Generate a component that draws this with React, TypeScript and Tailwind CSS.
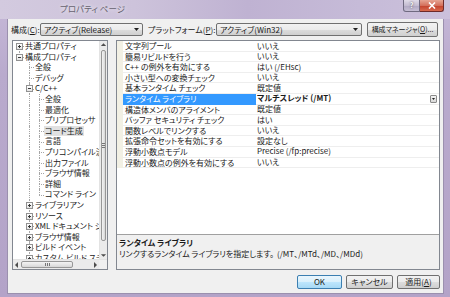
import React from "react";

type TreeItem = {
  t: string;
  l: number;
  e?: "+" | "-";
  up: boolean;
  down: boolean;
  cont?: number[];
  sel?: boolean;
};

const tree: TreeItem[] = [
  { t: "共通プロパティ", l: 0, e: "+", up: false, down: true },
  { t: "構成プロパティ", l: 0, e: "-", up: true, down: false },
  { t: "全般", l: 1, up: true, down: true },
  { t: "デバッグ", l: 1, up: true, down: true },
  { t: "C/C++", l: 1, e: "-", up: true, down: true },
  { t: "全般", l: 2, up: true, down: true, cont: [1] },
  { t: "最適化", l: 2, up: true, down: true, cont: [1] },
  { t: "プリプロセッサ", l: 2, up: true, down: true, cont: [1] },
  { t: "コード生成", l: 2, up: true, down: true, cont: [1], sel: true },
  { t: "言語", l: 2, up: true, down: true, cont: [1] },
  { t: "プリコンパイル済みヘッダー", l: 2, up: true, down: true, cont: [1] },
  { t: "出力ファイル", l: 2, up: true, down: true, cont: [1] },
  { t: "ブラウザ情報", l: 2, up: true, down: true, cont: [1] },
  { t: "詳細", l: 2, up: true, down: true, cont: [1] },
  { t: "コマンド ライン", l: 2, up: true, down: false, cont: [1] },
  { t: "ライブラリアン", l: 1, e: "+", up: true, down: true },
  { t: "リソース", l: 1, e: "+", up: true, down: true },
  { t: "XML ドキュメント ジェネレーター", l: 1, e: "+", up: true, down: true },
  { t: "ブラウザ情報", l: 1, e: "+", up: true, down: true },
  { t: "ビルド イベント", l: 1, e: "+", up: true, down: true },
  { t: "カスタム ビルド ステップ", l: 1, e: "+", up: true, down: true },
];

const props: [string, string][] = [
  ["文字列プール", "いいえ"],
  ["簡易リビルドを行う", "いいえ"],
  ["C++ の例外を有効にする", "はい (/EHsc)"],
  ["小さい型への変換チェック", "いいえ"],
  ["基本ランタイム チェック", "既定値"],
  ["ランタイム ライブラリ", "マルチスレッド (/MT)"],
  ["構造体メンバのアライメント", "既定値"],
  ["バッファ セキュリティ チェック", "はい"],
  ["関数レベルでリンクする", "いいえ"],
  ["拡張命令セットを有効にする", "設定なし"],
  ["浮動小数点モデル", "Precise (/fp:precise)"],
  ["浮動小数点の例外を有効にする", "いいえ"],
];

const col = (lv: number) => 6 + lv * 10;

function TreeRow({ r }: { r: TreeItem }) {
  const c = col(r.l);
  return (
    <div className="relative h-[10.6px] whitespace-nowrap">
      {r.cont?.map((a) => (
        <span key={a} className="absolute top-0 bottom-0 border-l border-dotted border-[#a5a5a5]" style={{ left: col(a) }} />
      ))}
      {r.up && <span className="absolute top-0 h-1/2 border-l border-dotted border-[#a5a5a5]" style={{ left: c }} />}
      {r.down && <span className="absolute top-1/2 bottom-0 border-l border-dotted border-[#a5a5a5]" style={{ left: c }} />}
      <span className="absolute top-1/2 w-[5px] border-t border-dotted border-[#a5a5a5]" style={{ left: c }} />
      {r.e && (
        <span
          className="absolute top-[2px] w-[7px] h-[7px] border border-[#919191] bg-[linear-gradient(#ffffff,#e3e3e3)] flex items-center justify-center"
          style={{ left: c - 3 }}
        >
          <span className="absolute w-[3px] h-px bg-[#3a3a3a]" />
          {r.e === "+" && <span className="absolute w-px h-[3px] bg-[#3a3a3a]" />}
        </span>
      )}
      <span
        className={`absolute top-0 h-full leading-[10.6px] px-px ${r.sel ? "bg-[#e1e1e1]" : ""}`}
        style={{ left: c + 5 }}
      >
        {r.t}
      </span>
    </div>
  );
}

function Arrow({ dir }: { dir: "up" | "down" | "left" | "right" }) {
  const pts = {
    up: "1,5 4,2 7,5",
    down: "1,3 4,6 7,3",
    left: "5,1 2,4 5,7",
    right: "3,1 6,4 3,7",
  }[dir];
  return (
    <svg width="8" height="8" viewBox="0 0 8 8">
      <polygon points={pts} fill="#4d4d4d" />
    </svg>
  );
}

function WinButton({ children, w, def, small }: { children: React.ReactNode; w: string; def?: boolean; small?: boolean }) {
  return (
    <div
      className={`${w} h-full rounded-[2px] border flex items-center justify-center whitespace-nowrap ${
        small ? "text-[7px]" : "text-[8px]"
      } text-[#1a1a1a] ${
        def
          ? "border-[#3c7fb1] bg-[linear-gradient(#eaf6fd,#d9f0fc_50%,#bee6fd_51%,#a7d9f5)]"
          : "border-[#707070] bg-[linear-gradient(#f2f2f2,#ebebeb_50%,#dddddd_51%,#cfcfcf)]"
      }`}
    >
      {children}
    </div>
  );
}

function Combo({ text, w }: { text: string; w: string }) {
  return (
    <div className={`${w} h-[13px] rounded-[2px] border border-[#707070] bg-[linear-gradient(#f2f2f2,#ebebeb_50%,#dddddd_51%,#cfcfcf)] flex items-center pl-[3px] pr-[3px] text-[8px] text-[#1a1a1a]`}>
      <span className="flex-1">{text}</span>
      <svg width="5" height="3" viewBox="0 0 5 3">
        <polygon points="0,0 5,0 2.5,3" fill="#222" />
      </svg>
    </div>
  );
}

export default function App() {
  return (
    <div className="w-[450px] h-[297px] overflow-hidden flex flex-col bg-[linear-gradient(180deg,#c6b9d8,#b9aacd_25%,#b3a3c8)] font-['Noto_Sans_CJK_JP',sans-serif] [font-feature-settings:'palt']">
      {/* Title bar */}
      <div className="relative h-[19px] shrink-0 bg-[linear-gradient(90deg,#d3cadf,#cdc3db_30%,#bfb2d2_55%,#c6bbd8_80%,#cbc0db)]">
        <span className="absolute left-[60px] top-[3px] text-[8.5px] leading-[11px] text-[#66626f] [text-shadow:0_0_4px_#ffffff]">
          プロパティ ページ
        </span>
        <div className="absolute right-[6px] top-0 flex">
          <div className="w-[17px] h-[12px] rounded-bl-[3px] border border-t-0 border-[#6f6a80] bg-[linear-gradient(#e0dbe8,#c3bcd1_50%,#b0a8c2_51%,#c6bfd5)] flex items-center justify-center text-[7px] font-bold text-white [text-shadow:0_0_2px_#333]">
            ?
          </div>
          <div className="w-[24px] h-[12px] rounded-br-[3px] border border-l-0 border-t-0 border-[#6e2a2a] bg-[linear-gradient(#e6a493,#d4705c_50%,#c2402c_51%,#d86a4f)] flex items-center justify-center">
            <svg width="8" height="7" viewBox="0 0 8 7">
              <path d="M1 0.5 L7 6.5 M7 0.5 L1 6.5" stroke="#fff" strokeWidth="1.6" />
            </svg>
          </div>
        </div>
      </div>

      {/* Client */}
      <div className="ml-[8px] mr-[7px] h-[274px] shrink-0 bg-[#f0f0f0] shadow-[0_0_0_1px_#9b90ae] flex flex-col">
        {/* Config row */}
        <div className="mt-[3px] h-[15px] pl-[3px] flex items-center text-[8px] text-[#1a1a1a] whitespace-nowrap">
          <span className="w-[29px]">
            構成(<span className="underline">C</span>):
          </span>
          <Combo text="アクティブ(Release)" w="w-[103px]" />
          <span className="ml-[5px] w-[68px]">
            プラットフォーム(<span className="underline">P</span>):
          </span>
          <Combo text="アクティブ(Win32)" w="w-[146px]" />
          <div className="ml-[5px] h-[15px]">
            <WinButton w="w-[71px]" small>
              構成マネージャ(<span className="underline">O</span>)...
            </WinButton>
          </div>
        </div>

        {/* Main row */}
        <div className="mt-[3px] h-[230px] pl-[4px] flex text-[8px] text-[#1a1a1a]">
          {/* Tree */}
          <div className="w-[96px] h-full border border-[#828790] bg-white flex flex-col overflow-hidden">
            <div className="flex-1 flex min-h-0">
              <div className="flex-1 overflow-hidden">
                {tree.map((r, i) => (
                  <TreeRow key={i} r={r} />
                ))}
              </div>
              <div className="w-[8px] flex flex-col bg-[#ebebeb] border-l border-[#e3e3e3]">
                <div className="h-[8px] flex items-center justify-center">
                  <Arrow dir="up" />
                </div>
                <div className="flex-1 px-px pt-px pb-[10px] flex">
                  <div className="flex-1 rounded-[2px] border border-[#979797] bg-[linear-gradient(90deg,#f3f3f3,#e6e6e6_50%,#d6d6d6)] flex flex-col items-center justify-center gap-px">
                    <span className="w-[3px] h-px bg-[#777]" />
                    <span className="w-[3px] h-px bg-[#777]" />
                    <span className="w-[3px] h-px bg-[#777]" />
                  </div>
                </div>
                <div className="h-[8px] flex items-center justify-center">
                  <Arrow dir="down" />
                </div>
              </div>
            </div>
            <div className="h-[10px] flex border-t border-[#e3e3e3] bg-[#ebebeb]">
              <div className="w-[8px] flex items-center justify-center">
                <Arrow dir="left" />
              </div>
              <div className="flex-1 py-px pr-[14px] flex">
                <div className="w-[52px] rounded-[2px] border border-[#979797] bg-[linear-gradient(#f3f3f3,#e6e6e6_50%,#d6d6d6)] flex items-center justify-center gap-px">
                  <span className="w-px h-[3px] bg-[#777]" />
                  <span className="w-px h-[3px] bg-[#777]" />
                  <span className="w-px h-[3px] bg-[#777]" />
                </div>
              </div>
              <div className="w-[8px] flex items-center justify-center">
                <Arrow dir="right" />
              </div>
              <div className="w-[8px] bg-[#f0f0f0]" />
            </div>
          </div>

          {/* Property grid */}
          <div className="ml-[8px] w-[324px] h-full border border-[#828790] flex flex-col">
            <div className="flex-1 bg-white">
              {props.map(([k, v], i) => {
                const sel = i === 5;
                return (
                  <div key={i} className="h-[10.6px] flex whitespace-nowrap leading-[10.6px]">
                    <div className="w-[6px] bg-[#f2f0e4]" />
                    <div
                      className={`w-[133px] pl-[2px] overflow-hidden border-b ${
                        sel ? "bg-[#3399ff] text-white border-[#3399ff]" : "border-[#eeeeee]"
                      }`}
                    >
                      {k}
                    </div>
                    <div className={`flex-1 pl-px flex items-center border-b border-[#eeeeee] ${sel ? "font-bold" : ""}`}>
                      <span className="flex-1">{v}</span>
                      {sel && (
                        <div className="mr-[2px] w-[7px] h-[8px] rounded-[1px] border border-[#8a8a8a] bg-[linear-gradient(#f4f4f4,#d8d8d8)] flex items-center justify-center">
                          <svg width="3" height="2" viewBox="0 0 3 2">
                            <polygon points="0,0 3,0 1.5,2" fill="#222" />
                          </svg>
                        </div>
                      )}
                    </div>
                  </div>
                );
              })}
            </div>
            <div className="h-[35px] border-t border-[#a0a0a0] bg-[#f0f0f0] pl-[2px] pt-[3px] leading-[10px]">
              <div className="font-bold">ランタイム ライブラリ</div>
              <div className="mt-px flex">
                <span className="w-[158px]">リンクするランタイム ライブラリを指定します。</span>
                <span>(/MT、/MTd、/MD、/MDd)</span>
              </div>
            </div>
          </div>
        </div>

        {/* Buttons */}
        <div className="mt-[5px] h-[14px] pr-[3px] flex justify-end gap-[4px]">
          <WinButton w="w-[45px]" def>
            OK
          </WinButton>
          <WinButton w="w-[47px]">キャンセル</WinButton>
          <WinButton w="w-[43px]">
            適用(<span className="underline">A</span>)
          </WinButton>
        </div>
      </div>
    </div>
  );
}
